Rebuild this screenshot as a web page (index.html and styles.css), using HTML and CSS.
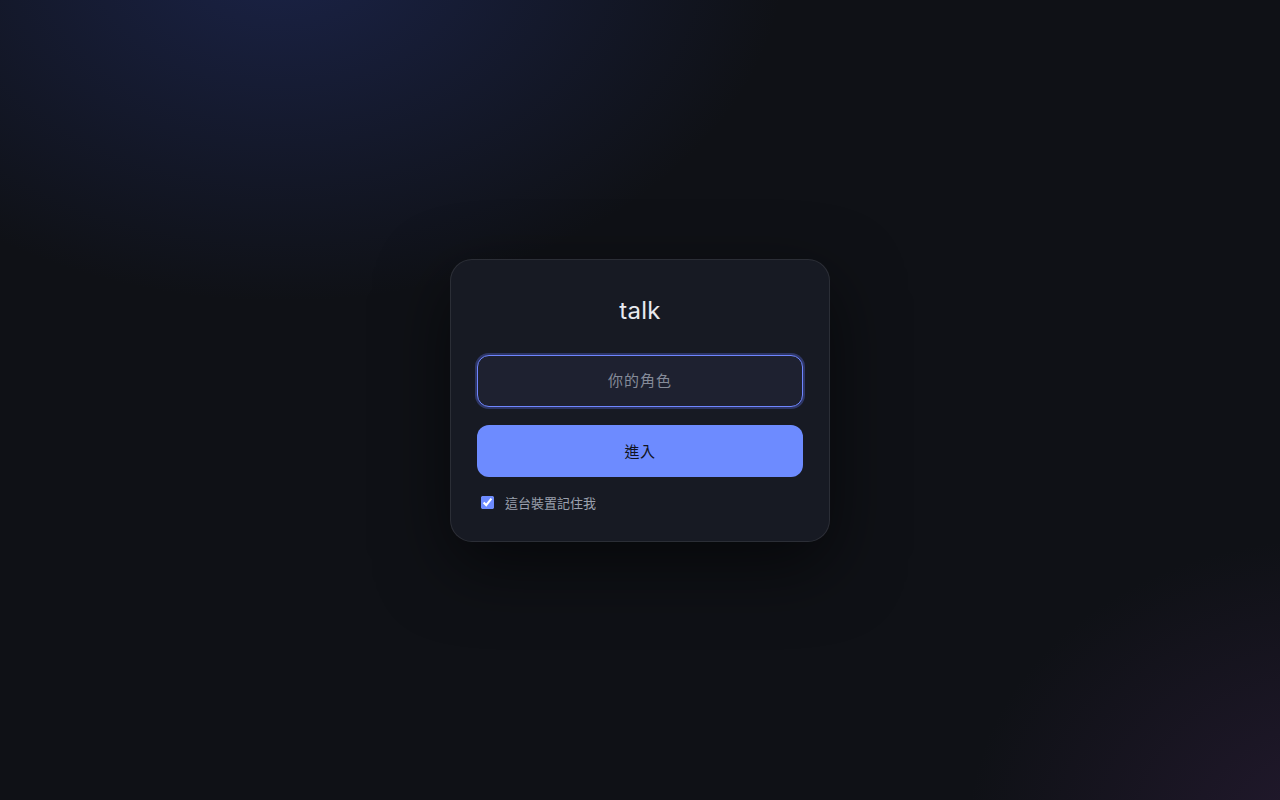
FILE: index.html
```html
<!DOCTYPE html>
<html lang="zh-Hant">
<head>
<meta charset="utf-8">
<title>talk</title>
<link rel="stylesheet" href="styles.css">
</head>
<body>
<main class="page">
  <form class="card">
    <h1 class="title">talk</h1>
    <input class="field" type="text" placeholder="你的角色" autofocus>
    <button class="enter" type="button">進入</button>
    <label class="remember">
      <input class="check" type="checkbox" checked>
      <span>這台裝置記住我</span>
    </label>
  </form>
</main>
</body>
</html>
```
FILE: styles.css
```css
* { box-sizing: border-box; }
html, body { margin: 0; height: 100%; }
body {
  font-family: Inter, "Noto Sans CJK TC", sans-serif;
  color: #e6e8ee;
  background:
    radial-gradient(720px 500px at 22% -6%, rgba(40, 56, 130, 0.45), transparent 70%),
    radial-gradient(520px 420px at 104% 104%, rgba(70, 40, 90, 0.35), transparent 70%),
    #0f1116;
}
.page {
  min-height: 100vh;
  display: grid;
  place-items: center;
}
.card {
  width: 380px;
  padding: 35px 26px 28px;
  background: #171a23;
  border: 1px solid rgba(255, 255, 255, 0.09);
  border-radius: 22px;
  box-shadow: 0 24px 70px rgba(0, 0, 0, 0.55);
  display: flex;
  flex-direction: column;
}
.title {
  margin: 0 0 28px;
  font-size: 24px;
  line-height: 32px;
  font-weight: 400;
  text-align: center;
  color: #e8eaf0;
  letter-spacing: 0.3px;
}
.field {
  height: 52px;
  margin: 0 0 18px;
  padding: 0 14px;
  background: #1e2130;
  border: 1px solid #6f86ff;
  border-radius: 12px;
  box-shadow: 0 0 0 2px rgba(88, 110, 230, 0.35);
  outline: none;
  font: 15px Inter, "Noto Sans CJK TC", sans-serif;
  color: #e6e8ee;
  text-align: center;
  caret-color: transparent;
}
.field::placeholder { color: #858b99; letter-spacing: 1px; }
.enter {
  height: 52px;
  border: 0;
  border-radius: 12px;
  background: #6d8bff;
  color: #111320;
  font: 15px Inter, "Noto Sans CJK TC", sans-serif;
  letter-spacing: 0.5px;
}
.remember {
  margin-top: 16px;
  height: 20px;
  display: flex;
  align-items: center;
  gap: 11px;
  padding-left: 4px;
  font-size: 13px;
  color: #9ba1ae;
}
.check {
  margin: 0;
  width: 13px;
  height: 13px;
  accent-color: #6d8bff;
}
```
